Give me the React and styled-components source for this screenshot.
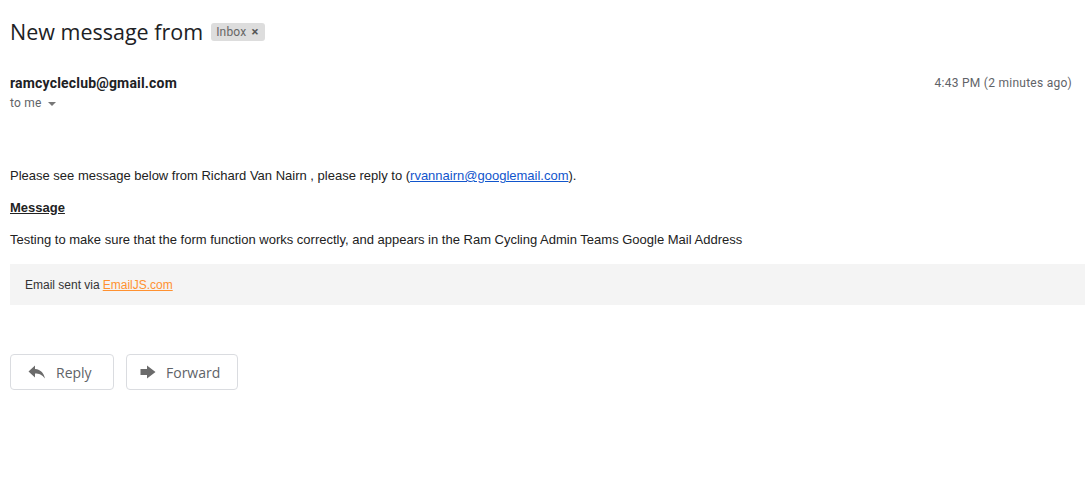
import React from "react";
import styled, { createGlobalStyle } from "styled-components";

const Global = createGlobalStyle`
  html, body { margin: 0; padding: 0; background: #fff; }
  body { font-family: Roboto, "Liberation Sans", Arial, sans-serif; }
`;

const Page = styled.div`
  padding: 0 0 0 10px;
  width: 1075px;
`;

const TitleRow = styled.div`
  display: flex;
  align-items: center;
  gap: 8px;
  padding-top: 16px;
  height: 30px;
`;

const Title = styled.h1`
  margin: 0;
  font-family: "Open Sans", Roboto, sans-serif;
  font-weight: 400;
  font-size: 21.5px;
  color: #202124;
`;

const Chip = styled.span`
  display: inline-flex;
  align-items: center;
  gap: 5px;
  background: #ddd;
  color: #666;
  font-family: Roboto, sans-serif;
  font-size: 12px;
  letter-spacing: 0.2px;
  padding: 0 6px 0 5px;
  height: 18px;
  border-radius: 3px;
  margin-top: 1px;
`;

const ChipX = styled.span`
  font-size: 13px;
  color: #555;
  font-weight: 700;
`;

const Header = styled.div`
  display: flex;
  justify-content: space-between;
  align-items: flex-start;
  margin-top: 27px;
  padding-right: 13px;
`;

const Sender = styled.div`
  font-family: Roboto, sans-serif;
  font-weight: 700;
  font-size: 14px;
  letter-spacing: 0.18px;
  color: #202124;
  line-height: 20px;
`;

const ToMe = styled.div`
  display: flex;
  align-items: center;
  gap: 6px;
  font-family: Roboto, sans-serif;
  font-size: 12px;
  letter-spacing: 0.2px;
  color: #5f6368;
  line-height: 20px;
`;

const Caret = styled.span`
  width: 0;
  height: 0;
  border-left: 4px solid transparent;
  border-right: 4px solid transparent;
  border-top: 4px solid #777;
  margin-top: 1px;
`;

const Time = styled.div`
  font-family: Roboto, sans-serif;
  font-size: 12px;
  letter-spacing: 0.26px;
  color: #5f6368;
  line-height: 20px;
`;

const Body = styled.div`
  margin-top: 55px;
  font-family: "Liberation Sans", Arial, sans-serif;
  font-size: 13px;
  color: #222;
`;

const P = styled.p`
  margin: 0 0 16px;
  line-height: 16px;
`;

const Strong = styled.p`
  margin: 0 0 16px;
  line-height: 16px;
  font-weight: 700;
  text-decoration: underline;
`;

const Link = styled.a`
  color: #1155cc;
  text-decoration: underline;
`;

const Footer = styled.div`
  background: #f4f4f4;
  margin-top: 16px;
  height: 41px;
  display: flex;
  align-items: center;
  padding-left: 15px;
  font-size: 12px;
  color: #333;
  width: 1060px;
`;

const OrangeLink = styled.a`
  color: #ff9130;
  text-decoration: underline;
  margin-left: 3px;
`;

const Actions = styled.div`
  display: flex;
  gap: 12px;
  margin-top: 49px;
`;

const Button = styled.button`
  display: flex;
  align-items: center;
  gap: ${(p) => p.gap}px;
  height: 36px;
  box-sizing: border-box;
  padding: 0 0 0 ${(p) => p.pl}px;
  width: ${(p) => p.w}px;
  background: #fff;
  border: 1px solid #dadce0;
  border-radius: 4px;
  font-family: "Open Sans", Roboto, sans-serif;
  font-size: 14px;
  color: #5f6368;
  cursor: pointer;
`;

const ReplyIcon = () => (
  <svg width="18" height="16" viewBox="0 0 18 16">
    <path d="M7 1.5 L0.5 7.5 L7 13.5 L7 9.5 C11 9.5 14 10.5 17 14.5 C16 9.5 13 5.5 7 5 Z" fill="#6b6b6b" />
  </svg>
);

const ForwardIcon = () => (
  <svg width="16" height="14" viewBox="0 0 16 14">
    <path d="M0.5 4 L7 4 L7 0.5 L15.5 7 L7 13.5 L7 10 L0.5 10 Z" fill="#6b6b6b" />
  </svg>
);

export default function App() {
  return (
    <Page>
      <Global />
      <TitleRow>
        <Title>New message from</Title>
        <Chip>
          Inbox <ChipX>×</ChipX>
        </Chip>
      </TitleRow>
      <Header>
        <div>
          <Sender>ramcycleclub@gmail.com</Sender>
          <ToMe>
            to me <Caret />
          </ToMe>
        </div>
        <Time>4:43 PM (2 minutes ago)</Time>
      </Header>
      <Body>
        <P>
          Please see message below from Richard Van Nairn , please reply to (
          <Link href="#">rvannairn@googlemail.com</Link>).
        </P>
        <Strong>Message</Strong>
        <P>
          Testing to make sure that the form function works correctly, and appears in the Ram Cycling Admin Teams Google Mail Address
        </P>
        <Footer>
          Email sent via<OrangeLink href="#">EmailJS.com</OrangeLink>
        </Footer>
      </Body>
      <Actions>
        <Button w={104} pl={17} gap={10}>
          <ReplyIcon />
          Reply
        </Button>
        <Button w={112} pl={13} gap={10}>
          <ForwardIcon />
          Forward
        </Button>
      </Actions>
    </Page>
  );
}
